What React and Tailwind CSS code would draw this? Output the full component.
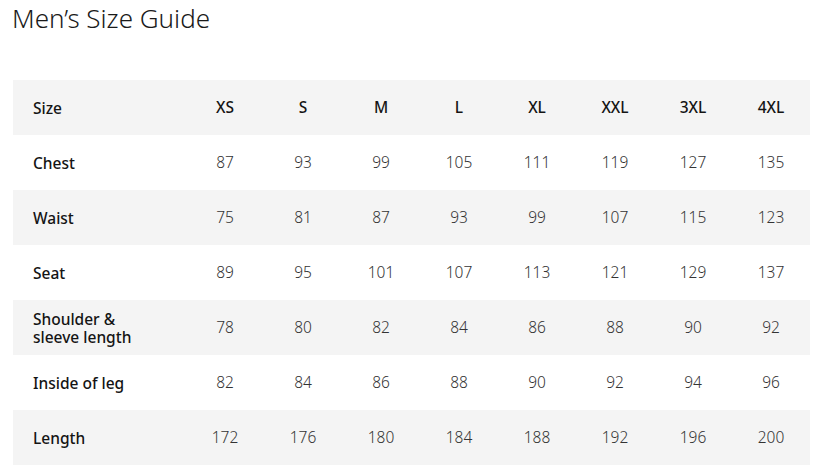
const sizes = ["XS", "S", "M", "L", "XL", "XXL", "3XL", "4XL"]

const rows = [
  { label: "Chest", values: [87, 93, 99, 105, 111, 119, 127, 135] },
  { label: "Waist", values: [75, 81, 87, 93, 99, 107, 115, 123] },
  { label: "Seat", values: [89, 95, 101, 107, 113, 121, 129, 137] },
  { label: "Shoulder & sleeve length", values: [78, 80, 82, 84, 86, 88, 90, 92] },
  { label: "Inside of leg", values: [82, 84, 86, 88, 90, 92, 94, 96] },
  { label: "Length", values: [172, 176, 180, 184, 188, 192, 196, 200] },
]

function Row({ label, cells, shaded, head }) {
  return (
    <div className={`flex h-[55px] items-center ${shaded ? "bg-[#f4f4f4]" : "bg-white"}`}>
      <div className="w-[173px] pl-5 pr-10 text-[15.5px] font-medium leading-[18px] text-[#141414]">{label}</div>
      {cells.map((c, i) => (
        <div
          key={i}
          className={`w-[78px] text-center text-[15.5px] ${head ? "font-medium text-[#141414]" : "font-light text-[#333]"}`}
        >
          {c}
        </div>
      ))}
    </div>
  )
}

export default function App() {
  return (
    <div className="min-h-screen bg-white px-[13px] pt-[2px] font-['Noto_Sans',sans-serif]">
      <h1 className="-ml-[1px] text-[26px] font-light leading-[32px] text-[#1a1a1a]">Men’s Size Guide</h1>
      <div className="mt-[46px] w-[797px]">
        <Row label="Size" cells={sizes} shaded head />
        {rows.map((r, i) => (
          <Row key={r.label} label={r.label} cells={r.values} shaded={i % 2 === 1} />
        ))}
      </div>
    </div>
  )
}
